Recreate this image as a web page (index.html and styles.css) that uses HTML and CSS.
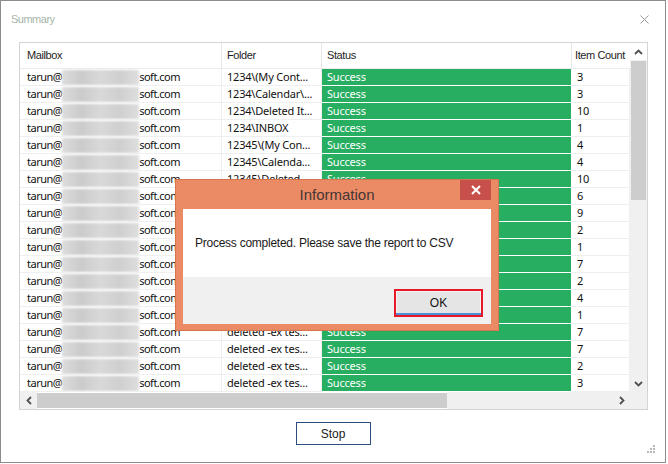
FILE: index.html
```html
<!DOCTYPE html>
<html lang="en">
<head>
    <meta charset="UTF-8">
    <meta name="viewport" content="width=device-width, initial-scale=1.0">
    <title>Summary</title>
    <link rel="stylesheet" href="styles.css">
</head>
<body>
    <div class="window">
        <div class="titlebar">
            <span class="title">Summary</span>
            <svg class="close-x" width="9" height="9" viewBox="0 0 9 9">
                <path d="M0.5 0.5 L8.5 8.5 M8.5 0.5 L0.5 8.5" stroke="#9a9a9a" stroke-width="1"/>
            </svg>
        </div>

        <div class="grid">
            <div class="grid-main">
                <div class="report" id="report">
                    <div class="th">Mailbox</div>
                    <div class="th">Folder</div>
                    <div class="th">Status</div>
                    <div class="th count-head">Item Count</div>
                </div>
                <div class="vscroll">
                    <div class="arrow up">
                        <svg width="9" height="6" viewBox="0 0 9 6"><polyline points="1,5 4.5,1.5 8,5" fill="none" stroke="#505050" stroke-width="1.8"/></svg>
                    </div>
                    <div class="vthumb"></div>
                    <div class="track"></div>
                    <div class="arrow down">
                        <svg width="9" height="6" viewBox="0 0 9 6"><polyline points="1,1 4.5,4.5 8,1" fill="none" stroke="#505050" stroke-width="1.8"/></svg>
                    </div>
                </div>
            </div>
            <div class="hscroll">
                <div class="arrow left">
                    <svg width="6" height="9" viewBox="0 0 6 9"><polyline points="5,1 1.5,4.5 5,8" fill="none" stroke="#505050" stroke-width="1.8"/></svg>
                </div>
                <div class="hthumb"></div>
                <div class="track"></div>
                <div class="arrow right">
                    <svg width="6" height="9" viewBox="0 0 6 9"><polyline points="1,1 4.5,4.5 1,8" fill="none" stroke="#505050" stroke-width="1.8"/></svg>
                </div>
                <div class="corner"></div>
            </div>
        </div>

        <div class="footer">
            <button class="stop">Stop</button>
        </div>

        <svg class="grip" width="9" height="9" viewBox="0 0 9 9" fill="#b8b8b8">
            <rect x="6" y="0" width="2" height="2"/>
            <rect x="3" y="3" width="2" height="2"/><rect x="6" y="3" width="2" height="2"/>
            <rect x="0" y="6" width="2" height="2"/><rect x="3" y="6" width="2" height="2"/><rect x="6" y="6" width="2" height="2"/>
        </svg>

        <div class="dialog">
            <div class="dialog-title">Information</div>
            <div class="dialog-close">
                <svg width="10" height="10" viewBox="0 0 10 10">
                    <path d="M1 1 L9 9 M9 1 L1 9" stroke="#fff" stroke-width="2"/>
                </svg>
            </div>
            <div class="dialog-body">
                <div class="dialog-message">Process completed. Please save the report to CSV</div>
                <div class="dialog-buttons">
                    <button class="ok">OK</button>
                </div>
            </div>
        </div>
    </div>

    <script>
        const rows = [
            ['1234\\(My Cont...', 3],
            ['1234\\Calendar\\...', 3],
            ['1234\\Deleted It...', 10],
            ['1234\\INBOX', 1],
            ['12345\\(My Con...', 4],
            ['12345\\Calenda...', 4],
            ['12345\\Deleted...', 10],
            ['12345\\INBOX', 6],
            ['deleted -ex tes...', 9],
            ['deleted -ex tes...', 2],
            ['deleted -ex tes...', 1],
            ['deleted -ex tes...', 7],
            ['deleted -ex tes...', 2],
            ['deleted -ex tes...', 4],
            ['deleted -ex tes...', 1],
            ['deleted -ex tes...', 7],
            ['deleted -ex tes...', 7],
            ['deleted -ex tes...', 2],
            ['deleted -ex tes...', 3]
        ];

        const report = document.getElementById('report');
        report.insertAdjacentHTML('beforeend', rows.map(row => `
            <div class="td mailbox">tarun@<span class="masked"></span>soft.com</div>
            <div class="td">${row[0]}</div>
            <div class="td status">Success</div>
            <div class="td">${row[1]}</div>
        `).join(''));
    </script>
</body>
</html>
```

FILE: styles.css
```css
body {
    margin: 0;
    background-color: white;
    font-family: "Liberation Sans", Arial, sans-serif;
}
.window {
    position: relative;
    width: 666px;
    height: 463px;
    box-sizing: border-box;
    border: 1px solid #8c8c8c;
    background-color: white;
}
.titlebar {
    height: 41px;
    box-sizing: border-box;
    display: flex;
    justify-content: space-between;
    align-items: flex-start;
    padding: 11px 16px 0 10px;
}
.title {
    font-size: 11px;
    letter-spacing: -0.5px;
    line-height: 14px;
    color: #a5b5a6;
}
.close-x {
    margin-top: 3px;
}
.grid {
    margin-left: 18px;
    width: 629px;
    box-sizing: border-box;
    border: 1px solid #d4d4d4;
}
.grid-main {
    display: flex;
}
.report {
    display: grid;
    grid-template-columns: 202px 100px 250px 58px;
    grid-auto-rows: 17px;
    grid-template-rows: 26px;
    width: 610px;
    overflow: hidden;
}
.th {
    box-sizing: border-box;
    border-right: 1px solid #e6e6e6;
    border-bottom: 1px solid #ececec;
    padding-left: 5px;
    font-size: 11px;
    letter-spacing: -0.4px;
    line-height: 25px;
    color: #1e1e1e;
    white-space: nowrap;
    overflow: hidden;
}
.th:first-child {
    padding-left: 7px;
}
.count-head {
    padding-left: 3px;
    border-right: none;
}
.td {
    box-sizing: border-box;
    border-right: 1px solid #efefef;
    border-bottom: 1px solid #efefef;
    padding-left: 5px;
    font-family: "Noto Sans", sans-serif;
    font-size: 11px;
    letter-spacing: -0.2px;
    line-height: 16px;
    color: #111;
    white-space: nowrap;
    overflow: hidden;
    text-overflow: ellipsis;
}
.mailbox {
    padding-left: 7px;
    letter-spacing: -0.5px;
    display: flex;
    align-items: center;
}
.masked {
    display: inline-block;
    width: 77px;
    height: 15px;
    background: linear-gradient(90deg, #dcdcdc, #cbcbcb 25%, #d9d9d9 50%, #cfcfcf 75%, #dedede);
    filter: blur(1px);
}
.status {
    background-color: #28ae61;
    color: white;
    border-right: 1px solid white;
    border-bottom: 1px solid white;
}
.vscroll {
    width: 17px;
    display: flex;
    flex-direction: column;
    background-color: #f0f0f0;
}
.arrow {
    width: 17px;
    height: 17px;
    flex: none;
    display: flex;
    align-items: center;
    justify-content: center;
    background-color: #f0f0f0;
}
.arrow.up {
    background-color: white;
}
.vthumb {
    height: 139px;
    margin: 1px 1px 0 1px;
    background-color: #cdcdcd;
}
.track {
    flex: 1;
    background-color: #f0f0f0;
}
.hscroll {
    display: flex;
    height: 17px;
}
.hthumb {
    width: 410px;
    margin: 1px 0;
    background-color: #cdcdcd;
}
.corner {
    width: 17px;
    background-color: #f0f0f0;
}
.footer {
    display: flex;
    justify-content: center;
    margin-top: 12px;
}
button {
    font-family: "Liberation Sans", Arial, sans-serif;
    cursor: pointer;
}
.stop {
    width: 75px;
    height: 23px;
    border: 1px solid #2c4d7f;
    background-color: white;
    font-size: 12px;
    color: #222;
    padding: 0;
}
.grip {
    position: absolute;
    right: 9px;
    bottom: 8px;
}
.dialog {
    position: absolute;
    left: 174px;
    top: 178px;
    width: 324px;
    height: 152px;
    box-sizing: border-box;
    border: 1px solid #d57550;
    background-color: #ea8b65;
    padding: 0 7px;
}
.dialog-title {
    height: 29px;
    text-align: center;
    font-size: 15px;
    line-height: 29px;
    color: #463636;
}
.dialog-close {
    position: absolute;
    top: 0;
    right: 7px;
    width: 31px;
    height: 20px;
    background-color: #c8504b;
    display: flex;
    align-items: center;
    justify-content: center;
}
.dialog-body {
    height: 115px;
    display: flex;
    flex-direction: column;
}
.dialog-message {
    height: 68px;
    background-color: white;
    padding-left: 12px;
    font-size: 12px;
    letter-spacing: -0.25px;
    line-height: 68px;
    color: #1a1a1a;
}
.dialog-buttons {
    flex: 1;
    background-color: #f0f0f0;
    display: flex;
    justify-content: flex-end;
    align-items: flex-start;
    padding: 12px 8px 0 0;
}
.ok {
    width: 89px;
    height: 28px;
    border: 2px solid #e8182a;
    background-color: #e5e5e5;
    box-shadow: inset 0 -2px 0 #4a8fd8, inset 0 0 0 1px #f4f4f4;
    font-size: 12px;
    color: #111;
    padding: 0;
}
```
